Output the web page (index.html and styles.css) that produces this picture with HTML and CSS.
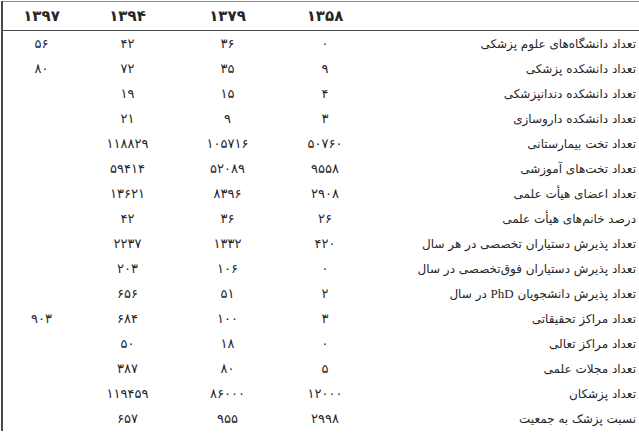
FILE: index.html
```html
<!DOCTYPE html>
<html lang="fa" dir="rtl">
<head>
<meta charset="utf-8">
<link rel="stylesheet" href="styles.css">
</head>
<body>
<table class="stats">
  <thead>
    <tr>
      <th class="label"></th>
      <th class="c58">۱۳۵۸</th>
      <th class="c79">۱۳۷۹</th>
      <th class="c94">۱۳۹۴</th>
      <th class="c97">۱۳۹۷</th>
    </tr>
  </thead>
  <tbody>
    <tr><td class="label">تعداد دانشگاه‌های علوم پزشکی</td><td>۰</td><td>۳۶</td><td>۴۲</td><td>۵۶</td></tr>
    <tr><td class="label">تعداد دانشکده پزشکی</td><td>۹</td><td>۳۵</td><td>۷۲</td><td>۸۰</td></tr>
    <tr><td class="label">تعداد دانشکده دندانپزشکی</td><td>۴</td><td>۱۵</td><td>۱۹</td><td></td></tr>
    <tr><td class="label">تعداد دانشکده داروسازی</td><td>۳</td><td>۹</td><td>۲۱</td><td></td></tr>
    <tr><td class="label">تعداد تخت بیمارستانی</td><td>۵۰۷۶۰</td><td>۱۰۵۷۱۶</td><td>۱۱۸۸۲۹</td><td></td></tr>
    <tr><td class="label">تعداد تخت‌های آموزشی</td><td>۹۵۵۸</td><td>۵۲۰۸۹</td><td>۵۹۴۱۴</td><td></td></tr>
    <tr><td class="label">تعداد اعضای هیأت علمی</td><td>۲۹۰۸</td><td>۸۳۹۶</td><td>۱۳۶۲۱</td><td></td></tr>
    <tr><td class="label">درصد خانم‌های هیأت علمی</td><td>۲۶</td><td>۳۶</td><td>۴۲</td><td></td></tr>
    <tr><td class="label">تعداد پذیرش دستیاران تخصصی در هر سال</td><td>۴۲۰</td><td>۱۳۳۲</td><td>۲۲۳۷</td><td></td></tr>
    <tr><td class="label">تعداد پذیرش دستیاران فوق‌تخصصی در سال</td><td>۰</td><td>۱۰۶</td><td>۲۰۳</td><td></td></tr>
    <tr><td class="label">تعداد پذیرش دانشجویان <span class="latin">PhD</span> در سال</td><td>۲</td><td>۵۱</td><td>۶۵۶</td><td></td></tr>
    <tr><td class="label">تعداد مراکز تحقیقاتی</td><td>۳</td><td>۱۰۰</td><td>۶۸۴</td><td>۹۰۳</td></tr>
    <tr><td class="label">تعداد مراکز تعالی</td><td>۰</td><td>۱۸</td><td>۵۰</td><td></td></tr>
    <tr><td class="label">تعداد مجلات علمی</td><td>۵</td><td>۸۰</td><td>۳۸۷</td><td></td></tr>
    <tr><td class="label">تعداد پزشکان</td><td>۱۲۰۰۰</td><td>۸۶۰۰۰</td><td>۱۱۹۴۵۹</td><td></td></tr>
    <tr><td class="label">نسبت پزشک به جمعیت</td><td>۲۹۹۸</td><td>۹۵۵</td><td>۶۵۷</td><td></td></tr>
  </tbody>
</table>
</body>
</html>
```

FILE: styles.css
```css
html, body {
  margin: 0;
  padding: 0;
  background: #ffffff;
}

body {
  width: 639px;
  height: 438px;
  overflow: hidden;
  font-family: "DejaVu Sans", "Noto Sans", sans-serif;
  color: #262626;
}

.stats {
  direction: rtl;
  border-collapse: collapse;
  table-layout: fixed;
  width: 636px;
  margin: 1px 0 0 3px;
  border-top: 1px solid #8a8a8a;
  border-left: 2px solid #4a4a4a;
}

.stats th {
  height: 28px;
  padding: 0;
  font-size: 15px;
  font-weight: bold;
  text-align: center;
  vertical-align: middle;
  border-bottom: 1px solid #4a4a4a;
}

.stats td {
  height: 25px;
  padding: 0;
  font-size: 13px;
  text-align: center;
  vertical-align: middle;
  white-space: nowrap;
}

.stats td.label {
  font-size: 12px;
}

.stats .label {
  width: 266px;
  text-align: right;
  padding-right: 3px;
}

.stats .c58 { width: 90px; }
.stats .c79 { width: 105px; }
.stats .c94 { width: 95px; }
.stats .c97 { width: 77px; }

.latin {
  font-family: "Liberation Serif", serif;
  font-size: 13px;
}
```
